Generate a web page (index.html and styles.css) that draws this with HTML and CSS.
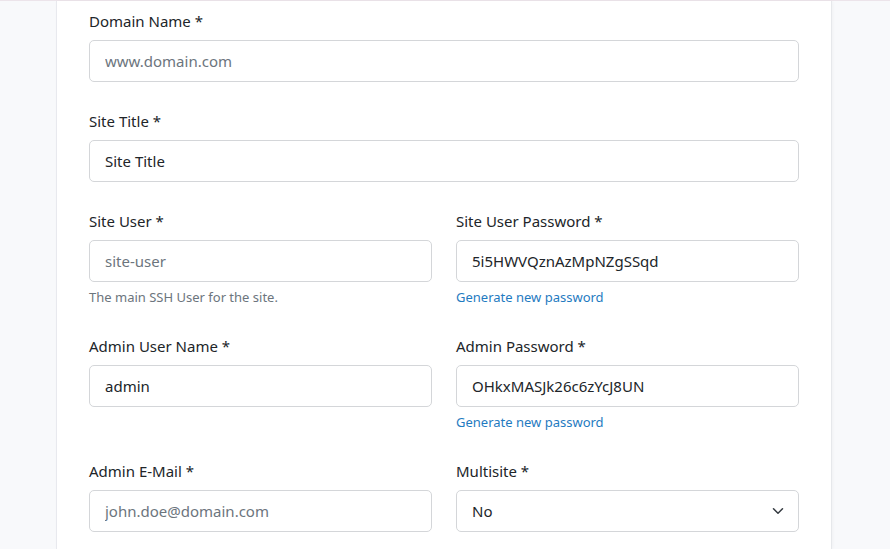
FILE: index.html
```html
<!DOCTYPE html>
<html lang="en">
<head>
<meta charset="utf-8">
<title>New Site</title>
<link rel="stylesheet" href="styles.css">
</head>
<body>
<div class="topline"></div>
<main class="card">
  <form class="form">
    <div class="group">
      <label class="label" for="domain">Domain Name *</label>
      <input class="control" id="domain" type="text" placeholder="www.domain.com">
    </div>
    <div class="group">
      <label class="label" for="title">Site Title *</label>
      <input class="control" id="title" type="text" value="Site Title">
    </div>
    <div class="row">
      <div class="group">
        <label class="label" for="user">Site User *</label>
        <input class="control" id="user" type="text" placeholder="site-user">
        <div class="help">The main SSH User for the site.</div>
      </div>
      <div class="group">
        <label class="label" for="userpw">Site User Password *</label>
        <input class="control" id="userpw" type="text" value="5i5HWVQznAzMpNZgSSqd">
        <a class="help link" href="#">Generate new password</a>
      </div>
    </div>
    <div class="row">
      <div class="group">
        <label class="label" for="admin">Admin User Name *</label>
        <input class="control" id="admin" type="text" value="admin">
      </div>
      <div class="group">
        <label class="label" for="adminpw">Admin Password *</label>
        <input class="control" id="adminpw" type="text" value="OHkxMASJk26c6zYcJ8UN">
        <a class="help link" href="#">Generate new password</a>
      </div>
    </div>
    <div class="row">
      <div class="group">
        <label class="label" for="email">Admin E-Mail *</label>
        <input class="control" id="email" type="text" placeholder="john.doe@domain.com">
      </div>
      <div class="group">
        <label class="label" for="multi">Multisite *</label>
        <div class="select-wrap">
          <select class="control select" id="multi">
            <option>No</option>
            <option>Yes</option>
          </select>
          <svg class="chev" width="12" height="12" viewBox="0 0 16 16"><path d="M2 5l6 6 6-6" fill="none" stroke="#343a40" stroke-width="2" stroke-linecap="round" stroke-linejoin="round"/></svg>
        </div>
      </div>
    </div>
  </form>
</main>
</body>
</html>
```
FILE: styles.css
```css
* { box-sizing: border-box; }
html, body { margin: 0; padding: 0; }
body {
  background: #f8f9fb;
  font-family: "Noto Sans", "Open Sans", sans-serif;
  color: #212529;
  height: 549px;
  overflow: hidden;
}
.topline {
  height: 1px;
  background: #ece4ea;
}
.card {
  margin: 0 58px 0 56px;
  background: #fff;
  border-left: 1px solid #e8e9ee;
  border-right: 1px solid #e6e8eb;
  box-shadow: 1px 0 3px rgba(0,0,0,0.03);
  padding: 8px 32px 20px 32px;
  height: 548px;
  overflow: hidden;
}
.form { display: flex; flex-direction: column; }
.row {
  display: grid;
  grid-template-columns: 1fr 1fr;
  column-gap: 24px;
}
.group {
  display: flex;
  flex-direction: column;
  align-items: flex-start;
  margin-bottom: 27px;
}
.label {
  font-size: 15px;
  line-height: 24px;
  margin-bottom: 7px;
  color: #212529;
}
.control {
  width: 100%;
  height: 42px;
  padding: 8px 15px;
  font-family: inherit;
  font-size: 15px;
  line-height: 24px;
  color: #212529;
  background: #fff;
  border: 1px solid #d4d6d9;
  border-radius: 5px;
  outline: none;
}
.control::placeholder { color: #6c757d; opacity: 1; }
.help {
  margin-top: 5px;
  font-size: 13px;
  line-height: 20px;
  color: #6c757d;
  text-decoration: none;
}
.link { color: #1f7bc1; }
.select-wrap { position: relative; width: 100%; }
.select {
  appearance: none;
  -webkit-appearance: none;
  padding-right: 40px;
}
.chev {
  position: absolute;
  right: 15px;
  top: 15px;
  pointer-events: none;
}
```
